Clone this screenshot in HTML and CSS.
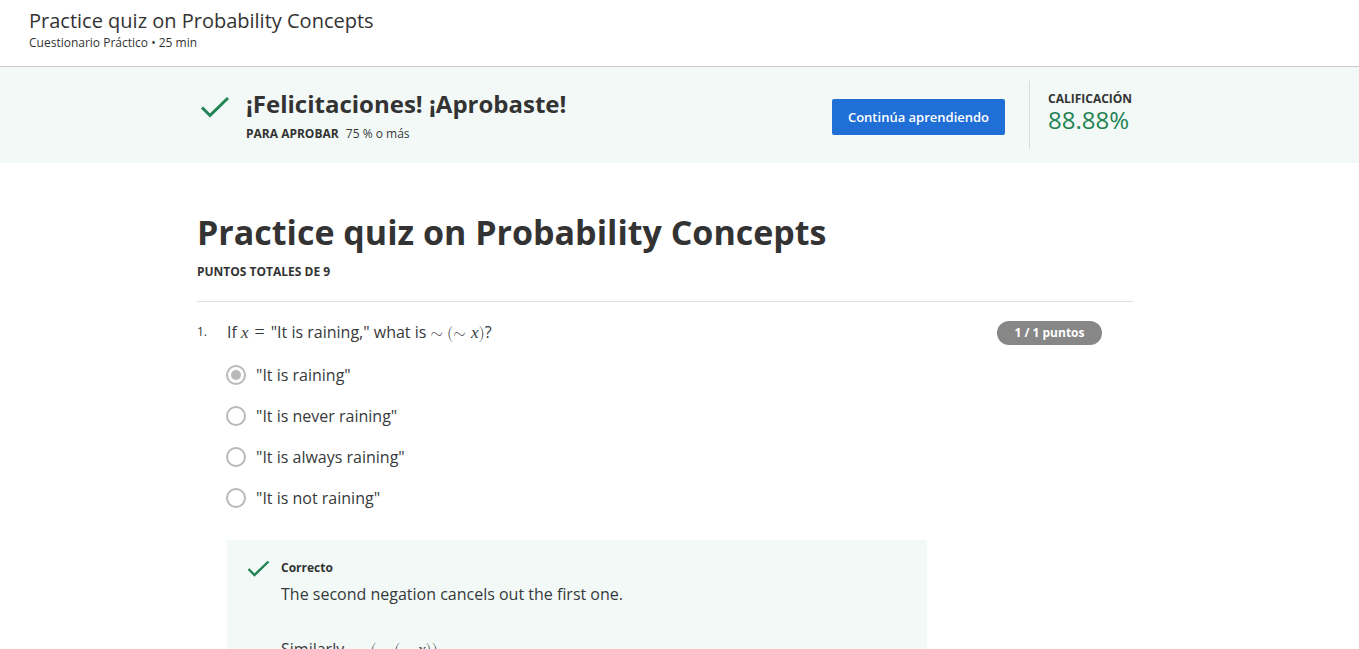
FILE: index.html
```html
<!DOCTYPE html>
<html lang="es">
<head>
<meta charset="utf-8">
<title>Practice quiz on Probability Concepts</title>
<link rel="stylesheet" href="styles.css">
</head>
<body>
<header class="topbar">
  <div class="topbar-title">Practice quiz on Probability Concepts</div>
  <div class="topbar-sub">Cuestionario Práctico • 25 min</div>
</header>
<section class="banner">
  <div class="banner-inner">
    <div class="banner-left">
      <svg class="check-big" width="30" height="22" viewBox="0 0 30 22"><path d="M2 11.5 L10 19.5 L28 2" fill="none" stroke="#1f8354" stroke-width="3"/></svg>
      <div>
        <div class="banner-title">¡Felicitaciones! ¡Aprobaste!</div>
        <div class="banner-pass"><span class="label">PARA APROBAR</span> 75 % o más</div>
      </div>
    </div>
    <button class="btn">Continúa aprendiendo</button>
    <div class="grade">
      <div class="grade-label">CALIFICACIÓN</div>
      <div class="grade-value">88.88%</div>
    </div>
  </div>
</section>
<main class="content">
  <h1 class="quiz-title">Practice quiz on Probability Concepts</h1>
  <div class="total">PUNTOS TOTALES DE 9</div>
  <div class="question">
    <div class="q-num">1.</div>
    <div class="q-body">
      <div class="q-head">
        <div class="q-text">If <span class="m mi">x</span><span class="m rel">=</span>"It is raining," what is <span class="m">∼</span> <span class="m">(∼ <span class="mi">x</span>)</span>?</div>
        <div class="badge">1 / 1 puntos</div>
      </div>
      <ul class="options">
        <li><span class="radio checked"></span>"It is raining"</li>
        <li><span class="radio"></span>"It is never raining"</li>
        <li><span class="radio"></span>"It is always raining"</li>
        <li><span class="radio"></span>"It is not raining"</li>
      </ul>
      <div class="feedback">
        <svg class="check-small" width="23" height="17" viewBox="0 0 23 17"><path d="M1.5 9 L7.5 15 L21.5 1.5" fill="none" stroke="#1f8354" stroke-width="2.4"/></svg>
        <div>
          <div class="fb-label">Correcto</div>
          <div class="fb-text">The second negation cancels out the first one.</div>
          <div class="fb-text more">Similarly, <span class="m">∼ (∼ (∼ <span class="mi">x</span>))</span></div>
        </div>
      </div>
    </div>
  </div>
</main>
</body>
</html>
```
FILE: styles.css
```css
* { box-sizing: border-box; }
html, body { margin: 0; padding: 0; }
body {
  font-family: "Open Sans", "Noto Sans", sans-serif;
  color: #373a3c;
  background: #fff;
  overflow: hidden;
}
.topbar {
  height: 67px;
  padding: 7px 29px 0;
  border-bottom: 1px solid #c8cbcc;
}
.topbar-title {
  font-size: 20px;
  line-height: 28px;
  color: #333;
}
.topbar-sub {
  font-size: 12px;
  line-height: 16px;
  color: #333;
}
.banner {
  background: #f2f9f7;
  height: 96px;
}
.banner-inner {
  width: 936px;
  margin-left: 197px;
  height: 96px;
  display: flex;
  align-items: center;
}
.banner-left {
  display: flex;
  align-items: flex-start;
  flex: 1;
  margin-top: -1px;
}
.check-big { margin: 9px 16px 0 3px; }
.banner-title {
  font-size: 24px;
  font-weight: 700;
  line-height: 34px;
  color: #333;
}
.banner-pass {
  font-size: 12px;
  line-height: 18px;
  margin-top: 4px;
}
.banner-pass .label { font-weight: 700; margin-right: 4px; color: #333; }
.btn {
  width: 173px;
  height: 36px;
  background: #1f6fd6;
  color: #fff;
  border: none;
  border-radius: 2px;
  font-family: "Open Sans", sans-serif;
  font-size: 13px;
  font-weight: 600;
  margin-top: 4px;
  margin-right: 24px;
  padding: 0;
}
.grade {
  border-left: 1px solid #d9dcdd;
  height: 68px;
  width: 104px;
  padding-left: 18px;
  padding-top: 10px;
  margin-top: 0;
}
.grade-label {
  font-size: 12px;
  font-weight: 700;
  line-height: 16px;
  color: #333;
}
.grade-value {
  font-size: 24px;
  line-height: 26px;
  color: #1f8354;
}
.content {
  width: 936px;
  margin-left: 197px;
  padding-top: 47px;
}
.quiz-title {
  margin: 0;
  font-size: 34px;
  font-weight: 700;
  line-height: 44px;
  color: #333;
}
.total {
  font-size: 12px;
  font-weight: 700;
  line-height: 16px;
  margin-top: 10px;
  color: #333;
  padding-bottom: 21px;
  border-bottom: 1px solid #dcdedf;
}
.question {
  display: flex;
  padding-top: 17px;
}
.q-num {
  width: 30px;
  font-size: 12px;
  line-height: 26px;
}
.q-body { flex: 1; }
.q-head {
  display: flex;
  justify-content: space-between;
  align-items: flex-start;
}
.q-text {
  font-size: 16px;
  line-height: 26px;
  color: #373a3c;
}
.m { font-family: "Latin Modern Math", "DejaVu Serif", "Liberation Serif", serif; }
.mi { font-family: "Liberation Serif", "DejaVu Serif", serif; font-style: italic; font-size: 17px; }
.rel { margin: 0 6px; font-family: "Liberation Serif", serif; font-size: 18px; }
.badge {
  margin-top: 2px;
  margin-right: 31px;
  width: 105px;
  height: 24px;
  border-radius: 12px;
  background: #878787;
  color: #fff;
  font-size: 12px;
  font-weight: 700;
  line-height: 24px;
  text-align: center;
}
.options {
  list-style: none;
  margin: 8px 0 0;
  padding: 0;
}
.options li {
  display: flex;
  align-items: center;
  height: 41px;
  font-size: 16px;
  color: #373a3c;
}
.radio {
  width: 20px;
  height: 20px;
  border: 2px solid #b9b9b9;
  border-radius: 50%;
  margin-right: 10px;
  margin-left: -1px;
  display: flex;
  align-items: center;
  justify-content: center;
  flex: none;
}
.radio.checked::after {
  content: "";
  width: 10px;
  height: 10px;
  border-radius: 50%;
  background: #b9b9b9;
}
.feedback {
  margin-top: 22px;
  width: 700px;
  background: #f2f9f7;
  padding: 19px 20px 30px;
  display: flex;
  align-items: flex-start;
}
.check-small { margin: 1px 11px 0 0; flex: none; }
.fb-label {
  font-size: 12px;
  font-weight: 700;
  line-height: 18px;
  color: #333;
}
.fb-text {
  font-size: 16px;
  line-height: 24px;
  margin-top: 5px;
}
.fb-text.more { margin-top: 31px; }
```
